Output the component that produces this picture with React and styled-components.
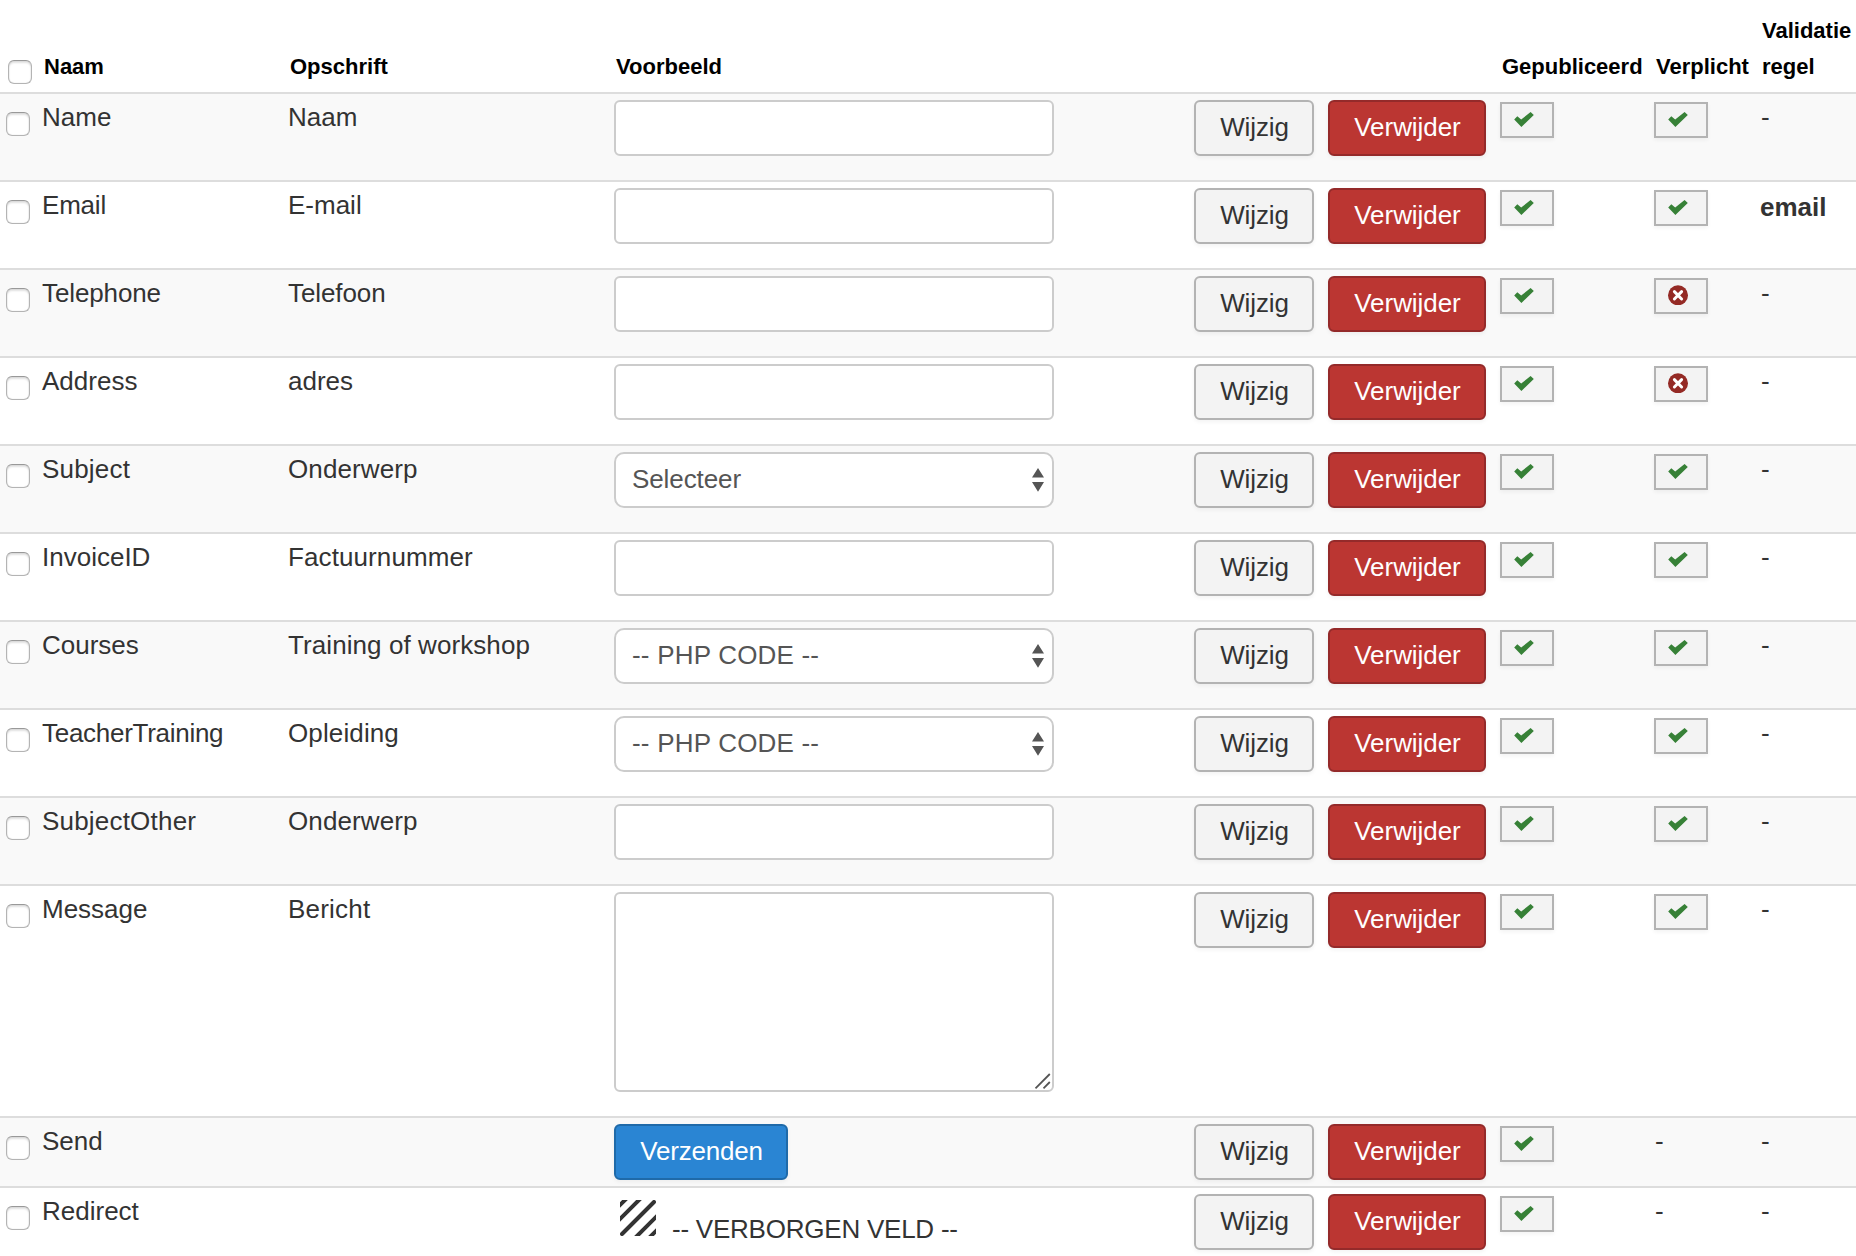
import React from 'react';
import styled, { createGlobalStyle, css } from 'styled-components';

const Global = createGlobalStyle`
  *, *::before, *::after { box-sizing: border-box; }
  html, body { margin: 0; height: 1256px; overflow: hidden; background: #fff; }
  body { font: 26px/36px "Liberation Sans", Arial, sans-serif; color: #333; }
`;

const Table = styled.table`
  width: 1856px;
  table-layout: fixed;
  border-collapse: separate;
  border-spacing: 0;
`;

const Col = styled.col`
  width: ${p => p.$w}px;
`;

const HeadCell = styled.th`
  height: 92px;
  padding: 12px 0 ${p => (p.$check ? 8 : 7)}px 2px;
  vertical-align: bottom;
  text-align: left;
  font-size: 22px;
  font-weight: bold;
  color: #000;
  white-space: nowrap;
`;

const Row = styled.tr`
  background: ${p => (p.$odd ? '#f9f9f9' : '#fff')};
`;

const Cell = styled.td`
  padding: 6px 0;
  border-top: 2px solid #ddd;
  vertical-align: top;
  white-space: nowrap;
`;

const Label = styled.span`
  display: block;
  margin-top: -1px;
  letter-spacing: ${p => p.$ls || 0}px;
`;

const Dash = styled(Label)`
  padding-left: 1px;
`;

const Rule = styled.strong`
  display: block;
  padding-top: 1px;
`;

const Check = styled.input.attrs({ type: 'checkbox' })`
  appearance: none;
  display: block;
  width: 24px;
  height: 24px;
  margin: ${p => (p.$head ? '0 0 0 6px' : '12px 0 0 6px')};
  border: 1px solid #b4b4b4;
  border-top-color: #999;
  border-radius: 6px;
  background: #fff;
  box-shadow: inset 0 2px 2px rgba(0, 0, 0, 0.12), inset 0 0 1px rgba(0, 0, 0, 0.25);
`;

const field = css`
  display: block;
  width: 440px;
  margin: 0 0 18px;
  border: 2px solid #ccc;
  border-radius: 6px;
  background: #fff;
  outline: none;
`;

const TextInput = styled.input`
  ${field}
  height: 56px;
`;

const AreaBox = styled.div`
  ${field}
  display: flex;
  justify-content: flex-end;
  align-items: flex-end;
  height: 200px;
`;

const SelectBox = styled.div`
  ${field}
  display: flex;
  justify-content: space-between;
  align-items: flex-start;
  height: 56px;
  padding: 7px 8px 0 16px;
  border-radius: 10px;
  color: #555;

  svg {
    margin-top: 7px;
  }
`;

const SelectText = styled.span`
  letter-spacing: ${p => p.$ls || 0}px;
`;

const Button = styled.button`
  display: flex;
  justify-content: center;
  align-items: center;
  width: ${p => p.$w}px;
  height: 56px;
  padding: 0 0 2px 1px;
  border: 2px solid ${p => p.$border};
  border-radius: 6px;
  background: ${p => p.$bg};
  color: ${p => p.$fg};
  font: inherit;
  letter-spacing: ${p => p.$ls || 0}px;
  box-shadow: 0 2px 4px rgba(0, 0, 0, 0.05);
`;

const StateButton = styled.button`
  display: flex;
  align-items: center;
  width: 54px;
  height: 36px;
  margin: 2px 0 0;
  padding: 0 0 2px 12px;
  border: 2px solid #b3b3b3;
  background: #f3f3f3;
  box-shadow: 0 2px 4px rgba(0, 0, 0, 0.05);
`;

const Hidden = styled.div`
  display: flex;
  align-items: flex-start;
  gap: 16px;
  padding: 6px 0 0 6px;
`;

const HiddenText = styled.span`
  padding-top: 11px;
  letter-spacing: ${p => p.$ls || 0}px;
`;

const Tick = () => (
  <svg width="20" height="20" viewBox="0 0 20 20">
    <path d="M0.2 10.4 L3.3 7.2 L7.2 10.6 L16.6 3 L19.8 6 L7.4 18 Z" fill="#378137" />
  </svg>
);

const Cross = () => (
  <svg width="20" height="20" viewBox="0 0 20 20">
    <circle cx="10" cy="10.3" r="10" fill="#942a25" />
    <path d="M6.4 6.6 L13.6 14 M13.6 6.6 L6.4 14" stroke="#fff" strokeWidth="3" strokeLinecap="round" />
  </svg>
);

const Arrows = () => (
  <svg width="12" height="24" viewBox="0 0 12 24">
    <path d="M0 9.5 L6 0 L12 9.5 Z M0 14 L12 14 L6 23.8 Z" fill="#555" />
  </svg>
);

const Grip = () => (
  <svg width="20" height="20" viewBox="0 0 20 20">
    <path d="M3.5 18.3 L17.8 4 M11.5 18.3 L17.8 12" stroke="#555" strokeWidth="1.8" />
  </svg>
);

const Stripes = () => (
  <svg width="36" height="36" viewBox="0 0 36 36">
    <path
      d="M-2 7 L7 -2 M-3 22 L22 -3 M2 34 L34 2 M14 39 L39 14 M28 39 L39 28"
      stroke="#333"
      strokeWidth="4"
      strokeLinecap="round"
    />
  </svg>
);

const State = ({ value }) => {
  if (value === '-') return <Dash>-</Dash>;
  return <StateButton>{value === 'yes' ? <Tick /> : <Cross />}</StateButton>;
};

const Preview = ({ type, text, spacing }) => {
  switch (type) {
    case 'select':
      return <SelectBox><SelectText $ls={spacing}>{text}</SelectText><Arrows /></SelectBox>;
    case 'area':
      return <AreaBox><Grip /></AreaBox>;
    case 'submit':
      return <Button $w={174} $ls={spacing} $bg="#2a85d3" $border="#1f6aa9" $fg="#fff">{text}</Button>;
    case 'hidden':
      return <Hidden><Stripes /><HiddenText $ls={spacing}>{text}</HiddenText></Hidden>;
    default:
      return <TextInput />;
  }
};

const widths = [42, 246, 326, 580, 134, 172, 154, 106, 96];

const heads = ['Naam', 'Opschrift', 'Voorbeeld', '', '', 'Gepubliceerd', 'Verplicht'];

const rows = [
  { name: 'Name', label: 'Naam', required: 'yes' },
  { name: 'Email', nameLs: -0.2, label: 'E-mail', required: 'yes', rule: 'email' },
  { name: 'Telephone', nameLs: -0.12, label: 'Telefoon', labelLs: -0.1, required: 'no' },
  { name: 'Address', label: 'adres', required: 'no' },
  { name: 'Subject', nameLs: 0.2, label: 'Onderwerp', labelLs: 0.12, type: 'select', text: 'Selecteer', spacing: -0.1, required: 'yes' },
  { name: 'InvoiceID', label: 'Factuurnummer', labelLs: 0.1, required: 'yes' },
  { name: 'Courses', label: 'Training of workshop', labelLs: 0.08, type: 'select', text: '-- PHP CODE --', spacing: 0.2, required: 'yes' },
  { name: 'TeacherTraining', nameLs: -0.28, label: 'Opleiding', labelLs: 0.12, type: 'select', text: '-- PHP CODE --', spacing: 0.2, required: 'yes' },
  { name: 'SubjectOther', nameLs: 0.2, label: 'Onderwerp', labelLs: 0.12, required: 'yes' },
  { name: 'Message', label: 'Bericht', labelLs: 0.2, type: 'area', required: 'yes' },
  { name: 'Send', label: '', type: 'submit', text: 'Verzenden', spacing: -0.2, required: '-' },
  { name: 'Redirect', label: '', type: 'hidden', text: '-- VERBORGEN VELD --', spacing: -0.23, required: '-' },
];

export default function App() {
  return (
    <>
      <Global />
      <Table>
        <colgroup>{widths.map((w, i) => <Col key={i} $w={w} />)}</colgroup>
        <thead>
          <tr>
            <HeadCell $check><Check $head /></HeadCell>
            {heads.map((h, i) => <HeadCell key={i}>{h}</HeadCell>)}
            <HeadCell>Validatie<br />regel</HeadCell>
          </tr>
        </thead>
        <tbody>
          {rows.map((r, i) => (
            <Row key={r.name} $odd={i % 2 === 0}>
              <Cell><Check /></Cell>
              <Cell><Label $ls={r.nameLs}>{r.name}</Label></Cell>
              <Cell><Label $ls={r.labelLs}>{r.label}</Label></Cell>
              <Cell><Preview type={r.type} text={r.text} spacing={r.spacing} /></Cell>
              <Cell><Button $w={120} $ls={-0.1} $bg="#f3f3f3" $border="#b3b3b3" $fg="#333">Wijzig</Button></Cell>
              <Cell><Button $w={158} $ls={-0.05} $bg="#bb3632" $border="#942a2a" $fg="#fff">Verwijder</Button></Cell>
              <Cell><State value="yes" /></Cell>
              <Cell><State value={r.required} /></Cell>
              <Cell>{r.rule ? <Rule>{r.rule}</Rule> : <Dash>-</Dash>}</Cell>
            </Row>
          ))}
        </tbody>
      </Table>
    </>
  );
}
